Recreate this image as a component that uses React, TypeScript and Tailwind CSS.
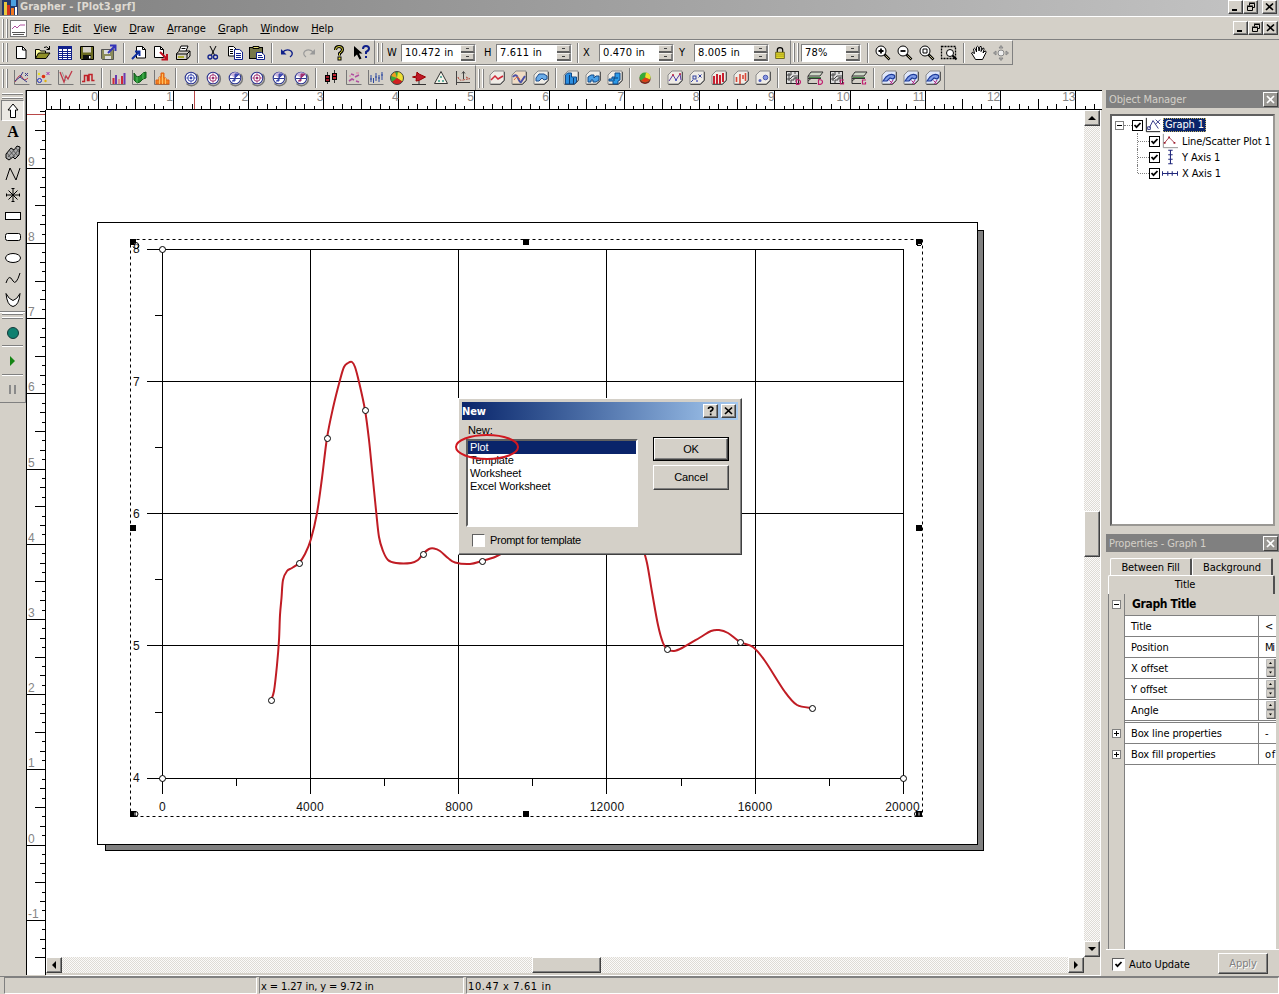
import React from 'react';

const RAISED =
  'border border-t-white border-l-white border-b-[#404040] border-r-[#404040] bg-[#d4d0c8] shadow-[inset_-1px_-1px_0_#808080]';
const SUNKEN = 'border border-t-[#808080] border-l-[#808080] border-b-white border-r-white';
const TRACK = 'bg-[repeating-conic-gradient(#dedbd5_0_25%,#fbfaf9_0_50%)] bg-[length:2px_2px]';

function Svg({ children, size = 18 }: { children: React.ReactNode; size?: number }) {
  return (
    <svg width={size} height={size} viewBox="0 0 18 18" fill="none" stroke="#000" className="shrink-0">
      {children}
    </svg>
  );
}

/* ---------- icon families ---------- */

const axes = <path d="M2.500 1v14.500h15" stroke="#777" />;

function AxesIcon({ children }: { children: React.ReactNode }) {
  return (
    <Svg>
      {axes}
      {children}
    </Svg>
  );
}

function Polar({ c, half }: { c: string; half?: boolean }) {
  return (
    <Svg>
      <path d="M14.500 5a6.800 6.800 0 0 1-10 9.500" stroke="#777" strokeWidth="1.500" />
      <circle cx="9" cy="9" r="5.800" fill="#fff" stroke="#2c3690" strokeWidth="1.100" />
      {half ? (
        <>
          <path d="M9 9L14 6A5.500 5.500 0 0 0 4.500 6z" fill="#c9b5dc" stroke="none" />
          <path d="M9 9l4-4h-4zM9 9v3H6" fill={c} stroke={c} />
          <path d="M4 9.500h10" stroke="#2c3690" />
        </>
      ) : (
        <>
          <circle cx="9" cy="9" r="3.300" stroke={c} />
          <circle cx="9" cy="9" r="1.300" fill={c} stroke="none" />
          <path d="M9 3.500v4M9 10.500v4M3.500 9h4M10.500 9h4" stroke={c} strokeWidth="0.600" />
        </>
      )}
    </Svg>
  );
}

function Cube({ children, fill = '#efece6' }: { children: React.ReactNode; fill?: string }) {
  return (
    <Svg>
      <path d="M2 6l4-4h10v9l-4 4H2z" fill={fill} stroke="#8b8b8b" />
      <path d="M2.500 15.500h10l4-4V3" stroke="#555" />
      {children}
    </Svg>
  );
}

const icons: Record<string, React.ReactNode> = {
  new: (
    <Svg>
      <path d="M4.500 2.500h6l3.500 3.500v8.500h-9.500z" fill="#fff" />
      <path d="M10.500 2.500v3.500h3.500" />
    </Svg>
  ),
  open: (
    <Svg>
      <path d="M1.500 14.500v-9h4l1 1.500h5v2" fill="#ffffa0" />
      <path d="M1.500 14.500l3-5.500h11.500l-4 5.500z" fill="#909028" />
      <path d="M10 3.500q3-2 5 1.500M15.500 2v3.500h-3" />
    </Svg>
  ),
  grid: (
    <Svg>
      <rect x="2.500" y="2.500" width="13" height="13" fill="#fff" stroke="#10208a" />
      <path d="M3 4h12" stroke="#10208a" strokeWidth="2" />
      <path d="M3 7.500h12M3 9.500h12M3 11.500h12M3 13.500h12M6.500 3v12M11.500 3v12" stroke="#10208a" />
    </Svg>
  ),
  save: (
    <Svg>
      <path d="M2.500 2.500h13v13h-12l-1-1z" fill="#6b6b22" />
      <path d="M5 3h8v5.500h-8z" fill="#d4d0c8" stroke="none" />
      <path d="M5 11h8v4h-8z" fill="#111" stroke="none" />
      <path d="M11 12h1.500v2.500h-1.500z" fill="#fff" stroke="none" />
    </Svg>
  ),
  export: (
    <Svg>
      <path d="M1.500 5.500h12v10h-11l-1-1z" fill="#8b8b5a" stroke="#555" />
      <path d="M4 6h6v4h-6zM5 12h6v3h-6z" fill="#ddd" stroke="none" />
      <path d="M8 9l7-7M10 1.500h5.500v5.500" stroke="#3434b8" strokeWidth="2" />
    </Svg>
  ),
  import: (
    <Svg>
      <path d="M6.500 2.500h6l3 3v8.500h-9z" fill="#fff" />
      <path d="M12.500 2.500v3h3" />
      <path d="M2 15l7-7M5 7.500h4.500v4.500" stroke="#1030a0" strokeWidth="2" />
    </Svg>
  ),
  exportPage: (
    <Svg>
      <path d="M2.500 2.500h6l3 3v8h-9z" fill="#fff" />
      <path d="M8.500 2.500v3h3" />
      <path d="M8 8l7 7M15 10v5.500h-5.500" stroke="#c01020" strokeWidth="2" />
    </Svg>
  ),
  print: (
    <Svg>
      <path d="M5 7l2-5h7l-2 5" fill="#fff" />
      <path d="M2.500 9.500l3-2.500h10.500v5l-3 3.500h-10.500z" fill="#d4d0c8" />
      <path d="M2.500 10h10.500l3-3M13 10v5M7.500 4.500h4" />
      <path d="M4 13h6" stroke="#a0a000" strokeWidth="1.500" />
    </Svg>
  ),
  cut: (
    <Svg>
      <path d="M6 2l4.500 9M12 2l-4.500 9" />
      <circle cx="6" cy="13" r="2" stroke="#10208a" strokeWidth="1.300" />
      <circle cx="11.500" cy="13" r="2" stroke="#10208a" strokeWidth="1.300" />
    </Svg>
  ),
  copy: (
    <Svg>
      <path d="M2.500 2.500h5l2.500 2.500v7h-7.500z" fill="#fff" />
      <path d="M8.500 5.500h5l3 2.500v7.500h-8z" fill="#fff" stroke="#10208a" />
      <path d="M4 5.500h3M4 7.500h3M4 9.500h3" />
      <path d="M10 9.500h5M10 11.500h5M10 13.500h5" stroke="#10208a" />
    </Svg>
  ),
  paste: (
    <Svg>
      <rect x="1.500" y="3.500" width="13" height="11" fill="#77774a" />
      <path d="M5 4.500v-2h6v2z" fill="#e8e070" />
      <path d="M8.500 8.500h5l3 2.500v4.500h-8z" fill="#fff" stroke="#10208a" />
      <path d="M10 11.500h4M10 13.500h5" stroke="#10208a" />
    </Svg>
  ),
  undo: (
    <Svg>
      <path d="M4 9q4-5 9-2 3 3-1 6" stroke="#10208a" strokeWidth="1.400" />
      <path d="M3 5v5.500h5.500z" fill="#10208a" stroke="none" />
    </Svg>
  ),
  redo: (
    <Svg>
      <path d="M14 9q-4-5-9-2-3 3 1 6" stroke="#999" strokeWidth="1.200" />
      <path d="M15 5v5.500h-5.500z" fill="#999" stroke="none" />
    </Svg>
  ),
  help: (
    <Svg>
      <path d="M5.500 6q0-3.500 3.500-3.500t3.500 3q0 2-3 4v2" strokeWidth="3" />
      <path d="M5.500 6q0-3.500 3.500-3.500t3.500 3q0 2-3 4v2" stroke="#e8e040" />
      <rect x="8" y="13" width="3" height="3" fill="#e8e040" />
    </Svg>
  ),
  whats: (
    <Svg>
      <path d="M2 2v11l3-2.500 2.500 5 2-1-2.500-5h3.500z" fill="#000" stroke="none" />
      <path d="M11 5q0-3 3-3t3 2.500q0 2-3 3.500v2M14 12v2" stroke="#10208a" strokeWidth="2" />
    </Svg>
  ),
  lock: (
    <Svg size={14}>
      <path d="M5.500 8v-3q0-3 3.500-3t3.500 3v3" strokeWidth="1.500" />
      <rect x="3.500" y="8" width="11" height="8" fill="#e6dc28" stroke="#55500a" />
      <path d="M4 10.500h10M4 13h10" stroke="#99901a" />
    </Svg>
  ),
  hand: (
    <Svg>
      <path
        d="M5.500 15.500L1.500 9q0-1.500 3 .5L3.500 5q1-1.500 2 0l1 3L6.500 3q1-1.500 2 0l.5 4 1-4.500q1.500-.5 1.500 1L11 7.500l2-3.500q1.500 0 1 1.500L13 9l2-2q1.500 0 1 1.500l-3.500 7z"
        fill="#fff"
      />
    </Svg>
  ),
  pan: (
    <Svg>
      <g stroke="#888" fill="#aaa">
        <circle cx="9" cy="9" r="3" fill="#eee" />
        <path d="M9 1.500l2 2.500h-4zM9 16.500l2-2.500h-4zM1.500 9l2.500-2v4zM16.500 9l-2.500-2v4z" />
      </g>
    </Svg>
  ),
  zoomIn: <Zoom d="M4.500 7h5M7 4.500v5" />,
  zoomOut: <Zoom d="M4.500 7h5" />,
  zoomFit: <Zoom d="M5 5h4v4h-4z" thin />,
  zoomRect: (
    <Svg>
      <rect x="1.500" y="2.500" width="14" height="12" strokeDasharray="2 1" strokeWidth="1.300" />
      <circle cx="10" cy="9" r="3.500" fill="#fff" />
      <path d="M12.500 11.500l4 4" strokeWidth="2" />
    </Svg>
  ),

  line: (
    <AxesIcon>
      <path d="M3 13q5-10 7-5t6 1" stroke="#c04050" />
      <path d="M3 12l5-4 3-5M8 8l7 5M13 4l3 3M16 4l-3 3" stroke="#3a3a8a" />
    </AxesIcon>
  ),
  scatter: (
    <AxesIcon>
      <circle cx="5.500" cy="11.500" r="2" stroke="#2030c0" />
      <circle cx="9.500" cy="7.500" r="1.800" fill="#e03010" stroke="none" />
      <path d="M12.500 3l3 3M15.500 3l-3 3" stroke="#a030b0" />
      <circle cx="11.500" cy="12" r="1.200" fill="#e0b010" stroke="none" />
      <circle cx="5" cy="5" r="1.200" fill="#e8e020" stroke="none" />
    </AxesIcon>
  ),
  func: (
    <AxesIcon>
      <path d="M4 3l4 10 2-6 2 3 4-8" stroke="#c03848" strokeWidth="1.300" />
      <path d="M6 3l4 9" stroke="#999" />
    </AxesIcon>
  ),
  step: (
    <AxesIcon>
      <path d="M4 12.500h2.500v-6h3v5h1.500v-6h3v6h2.500" stroke="#c02028" strokeWidth="1.500" />
    </AxesIcon>
  ),
  bar: (
    <AxesIcon>
      <path d="M5.500 15v-6M14 15v-8" stroke="#d02838" strokeWidth="2" />
      <path d="M8 15v-9M16.500 15v-11" stroke="#6a3ab0" strokeWidth="2" />
      <path d="M11 15v-5" stroke="#e09090" strokeWidth="2" />
    </AxesIcon>
  ),
  hilo: (
    <AxesIcon>
      <path d="M4 4l3 4 3-1 3-3 3-1v6l-3 1-3 3-3 1-3-3z" fill="#1e8a2c" stroke="#145a1c" />
      <path d="M7 8v6M13 4v6" stroke="#5ac060" />
    </AxesIcon>
  ),
  hist: (
    <AxesIcon>
      <path d="M4 15v-4h3v-3h2v-4h3v5h2v2h3v4z" fill="#f08020" stroke="#e06010" />
      <path d="M7.500 8v7M10.500 5v10M13.500 9v6" stroke="#ffc060" />
    </AxesIcon>
  ),
  box: (
    <Svg>
      <path d="M5.500 3v12M12.500 1v13" stroke="#333" />
      <rect x="3.500" y="6.500" width="4" height="6" fill="#a01828" />
      <rect x="10.500" y="4.500" width="4" height="6" fill="#c02030" />
      <path d="M3.500 9.500h4M10.500 7.500h4" />
    </Svg>
  ),
  bubble: (
    <AxesIcon>
      <path d="M5 12l3-2 2 1M7 5l3 1M11 8l4-2M12 12l3 1" stroke="#b050a0" strokeWidth="1.600" />
      <path d="M5 7h2M12 4h3" stroke="#e080a0" />
    </AxesIcon>
  ),
  vector: (
    <AxesIcon>
      <path d="M5 6v7M7.500 9v5M10 4v8M13 6v7M16 3v8M4 10h2M9 8h2M12 9h2M15 6h2" stroke="#2c48a0" />
    </AxesIcon>
  ),
  pie: (
    <Svg>
      <circle cx="9" cy="9" r="6.500" fill="#38a838" stroke="none" />
      <path d="M9 9l1-6.500A6.500 6.500 0 0 1 14.500 12.500z" fill="#f0e030" stroke="none" />
      <path d="M9 9l5.500 3.500A6.500 6.500 0 0 1 4 13z" fill="#d02020" stroke="none" />
      <path d="M9 9L3 7A6.500 6.500 0 0 1 7 2.800z" fill="#f0a020" stroke="none" />
      <circle cx="9" cy="9" r="6.500" stroke="#444" />
    </Svg>
  ),
  rose: (
    <Svg>
      <path d="M7 3l2 2 6.500 3-6.500 3.500L6 12l.5-3-4-1 4-1z" fill="#c01828" stroke="#900" />
      <path d="M9 12v3M2 15.500h14" stroke="#333" />
    </Svg>
  ),
  ternary: (
    <Svg>
      <path d="M9 2.500l6.500 12h-13z" fill="#f4f4ea" stroke="#333" />
      <circle cx="9" cy="8" r="1" fill="#389a88" stroke="none" />
      <circle cx="7" cy="12" r="1" fill="#389a88" stroke="none" />
      <circle cx="11" cy="12" r="1" fill="#389a88" stroke="none" />
    </Svg>
  ),
  err: (
    <Svg>
      <path d="M2.500 2v14M2 13.500h14M9.500 3v7M8 4.500l1.500-2 1.500 2" stroke="#444" />
      <path d="M4 8q1 4 5 3t6-1M12 8l4 2" stroke="#b04030" strokeDasharray="2 1" />
    </Svg>
  ),
  c3line: (
    <Cube>
      <path d="M3 11l4-4 3 3 5-3" stroke="#d02838" strokeWidth="1.500" />
    </Cube>
  ),
  c3wave: (
    <Cube fill="#f0dcc4">
      <path d="M3 8q3-4 5 1t3 4l4-6" stroke="#4a50a8" strokeWidth="2" />
      <path d="M4 11q4-6 6 0" stroke="#e06a40" />
    </Cube>
  ),
  c3ribbon: (
    <Cube>
      <path d="M4 12v-3l3-4h5l3 2v3l-3 1-2-2-3 3z" fill="#6aace8" stroke="#1c4e90" />
    </Cube>
  ),
  c3bar: (
    <Cube>
      <path d="M3.500 15v-9l2-2h4v4h5v5l-2 2z" fill="#2b8ee0" stroke="#124a88" />
      <path d="M7.500 15V6M11.500 15V9" stroke="#0d3c70" />
    </Cube>
  ),
  c3cat: (
    <Cube>
      <path d="M4 13v-5l3-2h3v3l2-2h3v4l-3 2h-3v-2h-2v2z" fill="#49a0e8" stroke="#124a88" />
    </Cube>
  ),
  c3float: (
    <Cube>
      <path d="M3 10h3v-2h3v-4h5v7l-2 1v3h-5v-3h-4z" fill="#2b9ae8" stroke="#124a88" />
      <path d="M8 12v-3h4" stroke="#0d3c70" />
    </Cube>
  ),
  c3pie: (
    <Svg>
      <ellipse cx="9" cy="10" rx="5.500" ry="5" fill="#7a1c1c" stroke="none" />
      <ellipse cx="9" cy="8.500" rx="5.500" ry="5" fill="#38a838" stroke="none" />
      <path d="M9 8.500l1-5a5.500 5 0 0 1 4 7z" fill="#f0e030" stroke="none" />
      <path d="M9 8.500l5 2a5.500 5 0 0 1-9 1z" fill="#e03818" stroke="none" />
    </Svg>
  ),
  xyz: (
    <Cube>
      <path d="M3 12l4-6 3 5 4-6 1 6" stroke="#5a3aa0" />
      <circle cx="7" cy="6" r="1" fill="#c02040" stroke="none" />
      <circle cx="10" cy="11" r="1" fill="#3040c0" stroke="none" />
      <circle cx="14" cy="5" r="1" fill="#c02040" stroke="none" />
    </Cube>
  ),
  xyzScatter: (
    <Cube>
      <rect x="5" y="7" width="3" height="3" stroke="#3040a0" />
      <path d="M10.500 5.500l3 3M13.500 5.500l-3 3" stroke="#3040a0" />
      <circle cx="9" cy="12" r="1" fill="#5a60c0" stroke="none" />
      <path d="M3 13l2-2" stroke="#3040a0" />
    </Cube>
  ),
  xyzBar: (
    <Cube>
      <path d="M4 15V7M7 15V5M10 15V6M13 13V4" stroke="#c82030" strokeWidth="2" />
    </Cube>
  ),
  xyzFloat: (
    <Cube>
      <path d="M4.500 13V8M8 15V5M11 10V6M13.500 12V4" stroke="#d84838" strokeWidth="1.600" />
    </Cube>
  ),
  xyzBubble: (
    <Cube>
      <circle cx="6" cy="11.500" r="1.500" fill="#5060c0" stroke="none" />
      <circle cx="11.500" cy="8.500" r="2.300" fill="#8898e0" stroke="#4a58b0" />
    </Cube>
  ),
  contourD: <Contour c="#c02070" />,
  contourG: <Contour c="#c02070" g />,
  surfD: <Surface c="#c02070" />,
  surfG: <Surface c="#c02070" g />,
  map: (
    <Cube fill="#dfe6f8">
      <path d="M3 12l3-4q4-4 8-2 2 2-1 4l-3-1-3 3z" fill="#7f9ce8" stroke="#1c3a98" strokeWidth="1.200" />
      <path d="M9.500 11.500l3.500 3.500M13 11l-2.500 4" stroke="#b02080" />
    </Cube>
  ),
};

function Zoom({ d, thin }: { d: string; thin?: boolean }) {
  return (
    <Svg>
      <circle cx="7" cy="7" r="5" fill="#fff" />
      <path d={d} strokeWidth={thin ? 1 : 1.8} />
      <path d="M10.500 10.500l5 5" strokeWidth="2.500" />
      <path d="M11.500 11.500l3.500 3.500" stroke="#e8e0a0" strokeWidth="0.800" />
    </Svg>
  );
}

function Contour({ c, g }: { c: string; g?: boolean }) {
  return (
    <Svg>
      <rect x="2.500" y="2.500" width="12" height="12" fill="#ddd" stroke="#222" />
      <path d="M3 6h4V3M3 10h3l3-3h5M7 14v-3h3V9h4M11 3v2M5 4v8M12 8v5" stroke="#444" />
      <path d={g ? 'M16 11h-3.500v4h3v-2' : 'M12.500 10.500v5q4 0 4-2.500t-4-2.500'} stroke={c} strokeWidth="1.200" />
    </Svg>
  );
}

function Surface({ c, g }: { c: string; g?: boolean }) {
  return (
    <Svg>
      <path d="M2 7l3-4h12l-3 4z" fill="#cfd8c8" stroke="#333" />
      <path d="M2 9.500h13M2 14.500h9M2 12l3-2.500M2 7v7.500" stroke="#333" />
      <path d="M3 8.500h12" stroke="#4a8a4a" />
      <path d={g ? 'M16 11h-3.500v4h3v-2' : 'M12.500 10.500v5q4 0 4-2.500t-4-2.500'} stroke={c} strokeWidth="1.200" />
    </Svg>
  );
}

/* ---------- small controls ---------- */

function Grip() {
  return (
    <div className="flex h-[19px] w-[10px] shrink-0 gap-[2px] pl-[2px]">
      <div className="w-[2px] border-l border-l-white border-r border-r-[#808080]" />
      <div className="w-[2px] border-l border-l-white border-r border-r-[#808080]" />
    </div>
  );
}

function Sep() {
  return (
    <div className="flex h-[20px] w-2 shrink-0 justify-center">
      <div className="w-[2px] border-l border-l-[#808080] border-r border-r-white" />
    </div>
  );
}

function IconRow({ names }: { names: string[] }) {
  return (
    <>
      {names.map((name, i) =>
        name === '|' ? (
          <Sep key={i} />
        ) : (
          <div key={i} className="flex h-[22px] w-[22px] shrink-0 items-center justify-center">
            {icons[name]}
          </div>
        ),
      )}
    </>
  );
}

function Spinner() {
  return (
    <div className="flex h-[16px] w-[14px] shrink-0 flex-col">
      {[0, 1].map((i) => (
        <div
          key={i}
          className="flex flex-1 items-center justify-center border-r-2 border-b-2 border-t border-t-[#f4f2ee] border-r-[#808080] border-b-[#606060] bg-[#d4d0c8]"
        >
          <div className="h-px w-[3px] bg-[#404040]" />
        </div>
      ))}
    </div>
  );
}

function Field({ value, className }: { value: string; className: string }) {
  return (
    <div className={`flex h-[18px] shrink-0 items-center bg-white pl-[3px] tracking-[0.2px] ${SUNKEN} ${className}`}>
      <span className="flex-1 whitespace-nowrap">{value}</span>
      <Spinner />
    </div>
  );
}

function WinButton({ kind, className = '' }: { kind: 'min' | 'restore' | 'close' | 'help'; className?: string }) {
  return (
    <div className={`flex h-[14px] w-[15px] shrink-0 items-center justify-center ${RAISED} ${className}`}>
      <svg width="10" height="10" viewBox="0 0 10 10" fill="none" stroke="currentColor">
        {kind === 'min' && <path d="M1 8h5" strokeWidth="2" />}
        {kind === 'restore' && <path d="M3.500 3.500v-2h5v4h-2M3 1h6M1.500 4.500h5v4h-5zM1 4h6" />}
        {kind === 'close' && <path d="M1 1.500l7 6.500M8 1.500l-7 6.500" strokeWidth="1.700" />}
        {kind === 'help' && <path d="M2.500 3q0-2 2.200-2t2.200 1.700q0 1.300-2.200 2.500v1M4.700 7.500v1.700" strokeWidth="1.700" />}
      </svg>
    </div>
  );
}

function Check({ on = true, flat, className = '' }: { on?: boolean; flat?: boolean; className?: string }) {
  return (
    <div
      className={`flex shrink-0 items-center justify-center bg-white ${
        flat ? 'h-[11px] w-[11px] border border-black' : 'h-[13px] w-[13px] border border-t-[#606060] border-l-[#606060] border-b-white border-r-white'
      } ${className}`}
    >
      {on && (
        <svg width="9" height="9" viewBox="0 0 9 9" fill="none" stroke="#000" strokeWidth="1.800">
          <path d="M1.500 4l2 2.200 4-4.200" />
        </svg>
      )}
    </div>
  );
}

function ArrowButton({ d }: { d: string }) {
  return (
    <div className={`flex h-4 w-4 shrink-0 items-center justify-center ${RAISED}`}>
      <svg width="8" height="8" viewBox="0 0 8 8">
        <path d={d} />
      </svg>
    </div>
  );
}

/* ---------- rulers ---------- */

const STEP = 75.2;
const tickLength = (n: number) => (n % 8 === 0 ? 19 : n % 4 === 0 ? 10 : n % 2 === 0 ? 5 : 3);

function HorizontalRuler() {
  const ticks = [];
  for (let n = -5; n <= 106; n++) ticks.push({ n, x: Math.floor(98 + (n * STEP) / 8) + 0.5 });
  return (
    <svg width="1076" height="20" viewBox="26 90 1076 20" className="shrink-0 bg-white" fill="none" stroke="#000">
      <path d="M26 90.500H1102M46 109.500H1102M26.500 90v20M46.500 90v20" />
      {ticks.map(({ n, x }) => (
        <path key={n} d={`M${x} ${109 - tickLength(n)}V109`} />
      ))}
      <path d="M194.500 91V109" stroke="#b84848" />
      <g fill="#858585" stroke="none" fontSize="12" textAnchor="end" fontFamily="Liberation Sans, sans-serif">
        {Array.from({ length: 14 }, (_, i) => (
          <text key={i} x={97.7 + i * STEP} y="101">
            {i}
          </text>
        ))}
      </g>
    </svg>
  );
}

function VerticalRuler() {
  const ticks = [];
  for (let n = -12; n <= 78; n++) ticks.push({ n, y: Math.floor(845 - (n * STEP) / 8) + 0.5 });
  return (
    <svg width="20" height="865" viewBox="26 110 20 865" className="shrink-0 bg-white" fill="none" stroke="#000">
      <path d="M26.500 110V975M45.500 110V975" />
      {ticks.map(({ n, y }) => (
        <path key={n} d={`M${45 - tickLength(n)} ${y}H45`} />
      ))}
      <path d="M27 114.500H45" stroke="#b84848" />
      <g fill="#858585" stroke="none" fontSize="12" fontFamily="Liberation Sans, sans-serif">
        {Array.from({ length: 11 }, (_, i) => i - 1).map((v) => (
          <text key={v} x="28" y={842.5 - v * STEP}>
            {v}
          </text>
        ))}
      </g>
    </svg>
  );
}

/* ---------- plot ---------- */

type Pt = [number, number];

const leftCurve: Pt[] = [
  [271, 700], [274, 691], [277, 665], [279, 640], [280, 615], [281.5, 598], [283, 580], [287, 571], [292, 568],
  [299, 563], [305, 554], [311, 539], [317, 513], [322, 478], [327, 438], [333, 408], [340, 380], [344, 367],
  [348, 363], [352, 362], [355, 367], [359, 382], [365, 410], [369, 440], [372, 470], [376, 510], [379, 537],
  [383, 551], [388, 560], [396, 563], [411, 563], [418, 560], [423, 554], [429, 549], [434, 548.5], [440, 551],
  [448, 558], [455, 562.5], [470, 564], [482, 561], [495, 557], [505, 552],
];
const rightCurve: Pt[] = [
  [642, 545], [647, 563], [652, 592], [658, 625], [663, 643], [667, 649], [674, 651], [682, 648], [700, 637.5],
  [711, 631], [719, 630], [728, 633], [740, 642], [753, 647], [765, 661], [785, 692], [797, 705], [812, 708],
];
const nodes: Pt[] = [
  [162, 249], [162, 778], [903, 778], [271, 700], [299, 563], [327, 438], [365, 410], [423, 554], [482, 561],
  [667, 649], [740, 642], [812, 708],
];
const handles: Pt[] = [
  [133, 242], [526, 242], [919, 242], [133, 528], [919, 528], [133, 814], [526, 814], [919, 814],
];

function smooth(p: Pt[]) {
  let d = `M${p[0]}`;
  for (let i = 0; i < p.length - 1; i++) {
    const [a, b, c, e] = [p[i - 1] ?? p[i], p[i], p[i + 1], p[i + 2] ?? p[i + 1]];
    d += `C${b[0] + (c[0] - a[0]) / 6} ${b[1] + (c[1] - a[1]) / 6} ${c[0] - (e[0] - b[0]) / 6} ${c[1] - (e[1] - b[1]) / 6} ${c[0]} ${c[1]}`;
  }
  return d;
}

function Plot() {
  return (
    <svg width="1038" height="847" viewBox="46 110 1038 847" className="block" fill="none" stroke="#000">
      <rect x="105.500" y="230.500" width="878" height="620" fill="#808080" />
      <rect x="97.500" y="222.500" width="880" height="622" fill="#fff" />
      <rect x="130.500" y="239.500" width="792" height="577" strokeDasharray="3 3" />
      {[162, 310, 458, 606, 755, 903].map((x) => (
        <path key={x} d={`M${x}.5 249V794`} />
      ))}
      {[249, 381, 513, 645, 778].map((y) => (
        <path key={y} d={`M147 ${y}.5H903`} />
      ))}
      {[236, 384, 532, 681, 829].map((x) => (
        <path key={x} d={`M${x}.5 778V786`} />
      ))}
      {[315, 447, 579, 712].map((y) => (
        <path key={y} d={`M155 ${y}.5H162`} />
      ))}
      <g fill="#111" stroke="none" fontSize="12" fontFamily="Liberation Sans, sans-serif">
        {[253, 386, 518, 650, 782].map((y, i) => (
          <text key={y} x="133" y={y}>
            {8 - i}
          </text>
        ))}
        {[162.5, 310, 459, 607, 755, 902.5].map((x, i) => (
          <text key={x} x={x} y="811" textAnchor="middle" letterSpacing="0.25">
            {i * 4000}
          </text>
        ))}
      </g>
      <path d={smooth(leftCurve)} stroke="#c01c24" strokeWidth="2" />
      <path d={smooth(rightCurve)} stroke="#c01c24" strokeWidth="2" />
      {handles.map(([x, y]) => (
        <rect key={`${x}-${y}`} x={x - 3} y={y - 3} width="6" height="6" fill="#000" stroke="none" />
      ))}
      <path d="M133 246.500a3 3 0 1 0 3-4M917 245.500h4M135.500 811.500a2.500 2.500 0 0 1 0 5M917 811.500a2.500 2.500 0 0 0 0 5" />
      <path d="M135 243.500l2 2M918 244.500h3M135 812.500v3M919 812.500v3" stroke="#ddd" />
      {nodes.map(([x, y]) => (
        <circle key={`${x}-${y}`} cx={x + 0.5} cy={y + 0.5} r="3" fill="#fff" />
      ))}
    </svg>
  );
}

/* ---------- "New" dialog ---------- */

function NewDialog() {
  return (
    <div
      className={`absolute left-[412px] top-[288px] flex h-[157px] w-[284px] flex-col p-[3px] font-['Liberation_Sans',sans-serif] text-[11px] leading-[13px] ${RAISED}`}
    >
      <div className="flex h-[18px] shrink-0 items-center bg-linear-to-r from-[#0a246a] to-[#a6caf0] pr-[2px]">
        <span className="flex-1 font-['DejaVu_Sans_Condensed','DejaVu_Sans',sans-serif] font-bold text-white">New</span>
        <WinButton kind="help" className="mr-[3px]" />
        <WinButton kind="close" />
      </div>
      <div className="flex pl-1 pt-1">
        <div className="w-[172px] shrink-0">
          <div className="pl-[2px]">New:</div>
          <div className="mt-[2px] h-[88px] border-2 border-t-[#606060] border-l-[#606060] border-b-white border-r-white bg-white">
            <div className="bg-[#0a246a] pl-[2px] text-white">Plot</div>
            <div className="pl-[2px]">Template</div>
            <div className="pl-[2px]">Worksheet</div>
            <div className="pl-[2px]">Excel Worksheet</div>
          </div>
          <div className="mt-[7px] flex items-center gap-[5px] pl-[6px]">
            <Check on={false} />
            <span className="whitespace-nowrap tracking-[-0.3px]">Prompt for template</span>
          </div>
        </div>
        <div className="ml-[15px] mt-[13px] flex w-[76px] flex-col gap-1">
          <div className="border border-black">
            <div className={`flex h-[22px] items-center justify-center ${RAISED}`}>OK</div>
          </div>
          <div className={`flex h-[25px] items-center justify-center ${RAISED}`}>Cancel</div>
        </div>
      </div>
      <svg width="66" height="28" viewBox="0 0 66 28" className="absolute -left-[5px] top-[34px]" fill="none">
        <ellipse cx="33" cy="14" rx="31" ry="12" stroke="#d01820" strokeWidth="2" />
      </svg>
    </div>
  );
}

/* ---------- left toolbox ---------- */

const tools: React.ReactNode[] = [
  <path d="M9 2l5 6h-2.500v7.500h-5V8H4z" fill="#fff" />,
  <text x="9" y="14" textAnchor="middle" fontSize="16" fontWeight="bold" fill="#000" stroke="none" fontFamily="Liberation Serif, serif">A</text>,
  <g>
    <path d="M2 10l5-6 3 2 3-4 3 1-1 8-4 4-2-2-4 3-3-2z" fill="#aaa" />
    <path d="M3 9l4 5M5 6l6 7M8 5l6 7M12 4l3 4M4 13l8-9M8 14l7-9" stroke="#444" strokeWidth="0.800" />
  </g>,
  <path d="M2 15L6 3l6 12 4-12" />,
  <path d="M9 2v14M2 9h14M4.500 4.500l9 9M13.500 4.500l-9 9M7.500 2.500h3M7.500 15.500h3M2.500 7.500v3M15.500 7.500v3" />,
  <rect x="1.500" y="5.500" width="15" height="7" fill="#fff" />,
  <rect x="1.500" y="5.500" width="15" height="7" rx="2" fill="#fff" />,
  <ellipse cx="9" cy="9" rx="7.500" ry="4.500" fill="#fff" />,
  <path d="M2 13q3-10 7-2 3 5 7-8" />,
  <path d="M2 2.500q1 12 7 13 6-1 7-13-3 6-7 7-4-1-7-7z" fill="#fff" />,
];

function HGrip() {
  return (
    <div className="mx-[2px] flex h-[7px] flex-col gap-[2px]">
      <div className="h-[2px] border-t border-t-white border-b border-b-[#808080]" />
      <div className="h-[2px] border-t border-t-white border-b border-b-[#808080]" />
    </div>
  );
}

function Toolbox() {
  return (
    <div className="flex w-[26px] shrink-0 flex-col">
      <div className="flex h-[313px] flex-col border-r border-b border-[#808080] pt-[3px]">
        <HGrip />
        {tools.map((tool, i) => (
          <div key={i} className={`mx-[1px] flex h-[21px] items-center justify-center ${i === 0 ? `bg-[#ebe8e3] ${SUNKEN}` : ''}`}>
            <Svg>{tool}</Svg>
          </div>
        ))}
        <div className="mt-px border-t border-t-[#808080] border-b border-b-white" />
        <HGrip />
        <div className="flex h-[25px] shrink-0 items-center justify-center">
          <svg width="14" height="14" viewBox="0 0 14 14">
            <circle cx="7" cy="7" r="5.500" fill="#0e8070" stroke="#143a3a" />
          </svg>
        </div>
        <div className="mx-[2px] border-t border-t-[#808080] border-b border-b-white" />
        <div className="flex h-[27px] shrink-0 items-center justify-center">
          <svg width="6" height="10" viewBox="0 0 6 10">
            <path d="M0 0l5 5-5 5z" fill="#148414" />
          </svg>
        </div>
        <div className="mx-[2px] border-t border-t-[#808080] border-b border-b-white" />
        <div className="flex flex-1 items-center justify-center gap-[3px] pt-px">
          <div className="h-[9px] w-[2px] bg-[#8a8a8a]" />
          <div className="h-[9px] w-[2px] bg-[#8a8a8a]" />
        </div>
      </div>
    </div>
  );
}

/* ---------- right dock ---------- */

function DockTitle({ text }: { text: string }) {
  return (
    <div className="flex h-[18px] shrink-0 items-center bg-[#808080] pl-[3px] pr-[1px] text-[#d4d0c8]">
      <span className="flex-1">{text}</span>
      <div className="flex h-[15px] w-[15px] items-center justify-center border border-t-white border-l-white border-b-[#404040] border-r-[#404040] bg-[#9a9894] text-white">
        <svg width="9" height="9" viewBox="0 0 9 9" stroke="#fff" strokeWidth="1.600">
          <path d="M1 1l7 7M8 1l-7 7" />
        </svg>
      </div>
    </div>
  );
}

function Expander({ sign }: { sign: '+' | '-' }) {
  return (
    <svg width="9" height="9" viewBox="0 0 9 9" fill="#fff" className="shrink-0">
      <rect x="0.500" y="0.500" width="8" height="8" stroke="#808080" />
      <path d={sign === '+' ? 'M2 4.500h5M4.500 2v5' : 'M2 4.500h5'} stroke="#000" />
    </svg>
  );
}

const children = [
  { name: 'Line/Scatter Plot 1', icon: <><path d="M1.500 1v15.500H18" stroke="#888" /><path d="M3 11l5-6 6 6" stroke="#a03040" /><path d="M2 10h2v2H2zM7 4h2v2H7zM13 10h2v2h-2z" fill="#a02030" stroke="none" /></> },
  { name: 'Y Axis 1', icon: <path d="M9.500 1v16M7 1.500h5M7 6.500h5M7 11.500h5M7 16.500h5" stroke="#22287c" strokeWidth="1.200" /> },
  { name: 'X Axis 1', icon: <path d="M0 9.500h18M.5 7v5M6.500 7v5M11.500 7v5M17.500 7v5" stroke="#22287c" strokeWidth="1.200" /> },
];

function ObjectManager() {
  return (
    <div className="mx-1 mt-[6px] h-[412px] shrink-0 border-2 border-t-[#606060] border-l-[#606060] border-b-[#9a9894] border-r-[#9a9894] bg-white pt-px">
      <div className="flex h-4 items-center pl-[3px]">
        <Expander sign="-" />
        <div className="w-[8px] border-t border-dotted border-[#808080]" />
        <Check flat />
        <div className="flex w-5 justify-center">
          <Svg size={16}>
            <path d="M1.500 1v15.500H17" />
            <path d="M5 12l4-8 6 9M12 3l5 5M17 3l-5 5M3 11h3v3H3z" stroke="#22287c" />
          </Svg>
        </div>
        <span className="bg-[#0a246a] px-[2px] leading-[14px] text-white outline-1 -outline-offset-1 outline-dotted outline-[#c0b060]">Graph 1</span>
      </div>
      {children.map((item, i) => (
        <div key={item.name} className="flex h-4 items-center pl-[25px]">
          <div className={`w-px self-start border-l border-dotted border-[#808080] ${i === 2 ? 'h-[8px]' : 'h-4'}`} />
          <div className="w-[11px] border-t border-dotted border-[#808080]" />
          <Check flat />
          <div className="flex w-[20px] justify-center">
            <Svg size={16}>{item.icon}</Svg>
          </div>
          <span className="whitespace-nowrap pl-[2px]">{item.name}</span>
        </div>
      ))}
    </div>
  );
}

function PropRow({ name, value, spin, sign }: { name: string; value?: string; spin?: boolean; sign?: '+' }) {
  return (
    <div className="flex h-[21px] shrink-0">
      <div className="flex w-[15px] items-center justify-center bg-[#d4d0c8]">{sign && <Expander sign={sign} />}</div>
      <div className="flex w-[135px] items-center border-r border-b border-l border-[#808080] pl-[6px]">{name}</div>
      <div className="flex flex-1 items-center justify-end whitespace-nowrap border-b border-[#808080]">
        {value && <span className="w-[11px] tracking-[-1.2px]">{value}</span>}
        {spin && (
          <svg width="10" height="18" viewBox="0 0 10 18" fill="#d4d0c8" stroke="#606060">
            <path d="M0.500 0.500h8v8h-8zM0.500 9.500h8v8h-8z" stroke="#bbb" />
            <path d="M9 0v18M1 8.500h8M1 17.500h8" strokeWidth="1.500" />
            <path d="M3 5h3l-1.500-2zM3 12.500h3l-1.500 2z" fill="#000" stroke="none" />
          </svg>
        )}
      </div>
    </div>
  );
}

function Properties() {
  const tab = 'flex items-center justify-center rounded-t-[2px] border-t border-l border-t-white border-l-white border-r-2 border-r-[#505050]';
  return (
    <>
      <div className="ml-1 mr-[5px] mt-[6px] flex h-[17px] shrink-0 pr-px">
        <div className={`w-[82px] ${tab}`}>Between Fill</div>
        <div className={`w-[81px] ${tab}`}>Background</div>
      </div>
      <div className={`ml-[2px] mr-[4px] h-[19px] shrink-0 pb-px ${tab}`}>
        <span className="-ml-[12px]">Title</span>
      </div>
      <div className="ml-[2px] mr-[3px] flex h-[355px] shrink-0 flex-col border-l border-[#808080] bg-white">
        <div className="flex h-[22px] shrink-0 bg-[#d4d0c8]">
          <div className="flex w-[15px] items-center justify-center pb-[2px]">
            <Expander sign="-" />
          </div>
          <div className="flex flex-1 items-center border-b border-l border-[#808080] pl-[7px] text-[12px] font-bold tracking-[-0.35px]">
            Graph Title
          </div>
        </div>
        <PropRow name="Title" value="<" />
        <PropRow name="Position" value="Mi" />
        <PropRow name="X offset" spin />
        <PropRow name="Y offset" spin />
        <PropRow name="Angle" spin />
        <div className="flex h-[2px] shrink-0">
          <div className="w-[15px] bg-[#d4d0c8]" />
          <div className="flex-1 border-b border-l border-[#808080]" />
        </div>
        <PropRow name="Box line properties" value="-" sign="+" />
        <PropRow name="Box fill properties" value="o f" sign="+" />
        <div className="w-[16px] flex-1 border-r border-[#808080] bg-[#d4d0c8]" />
      </div>
      <div className="flex h-[27px] shrink-0 items-center border-t border-white pl-[6px] pr-[11px] pt-[3px]">
        <Check />
        <span className="flex-1 pl-1">Auto Update</span>
        <div className={`mb-[3px] flex h-[21px] w-[50px] items-center justify-center text-[#808080] [text-shadow:1px_1px_0_#fff] ${RAISED}`}>
          Apply
        </div>
      </div>
    </>
  );
}

/* ---------- page ---------- */

const menu = ['File', 'Edit', 'View', 'Draw', 'Arrange', 'Graph', 'Window', 'Help'];

const fileBar = ['new', 'open', 'grid', 'save', 'export', '|', 'import', 'exportPage', 'print', '|', 'cut', 'copy', 'paste', '|', 'undo', 'redo', '|', 'help', 'whats'];
const zoomBar = ['|', 'zoomIn', 'zoomOut', 'zoomFit', 'zoomRect', '|', 'hand', 'pan'];
const plots2d = ['line', 'scatter', 'func', 'step', '|', 'bar', 'hilo', 'hist', '|'];
const plots2dMore = ['|', 'box', 'bubble', 'vector', 'pie', 'rose', 'ternary', 'err'];
const plots3d = ['c3line', 'c3wave', 'c3ribbon', '|', 'c3bar', 'c3cat', 'c3float', '|', 'c3pie', '|', 'xyz', 'xyzScatter', 'xyzBar', 'xyzFloat', 'xyzBubble', '|', 'contourD', 'surfD', 'contourG', 'surfG', '|', 'map', 'map', 'map'];

export default function App() {
  return (
    <div className="flex h-[994px] w-[1279px] flex-col overflow-hidden bg-[#d4d0c8] font-['DejaVu_Sans_Condensed','DejaVu_Sans',sans-serif] text-[11px] leading-[13px] tracking-[-0.12px] text-black">
      {/* Title bar */}
      <div className="flex h-[16px] shrink-0 items-start bg-linear-to-r from-[#808080] to-[#c4c4c4] pl-[2px] pr-[2px]">
        <svg width="16" height="15" viewBox="0 0 16 15">
          <path d="M0 0h16v15H0z" fill="#24386a" />
          <path d="M2 2h3v13H2z" fill="#e8c840" />
          <path d="M5 5h3v10H5z" fill="#d03020" />
          <path d="M9 0h5v6H9z" fill="#4aa0e0" />
          <path d="M9 8h3v7H9z" fill="#f07820" />
          <path d="M13 7h2v8h-2z" fill="#fff" />
        </svg>
        <span className="flex-1 pl-[2px] tracking-[0.05px] font-bold text-[#dedad2]">Grapher - [Plot3.grf]</span>
        <WinButton kind="min" />
        <WinButton kind="restore" />
        <WinButton kind="close" className="ml-[4px]" />
      </div>

      {/* Menu bar */}
      <div className="flex h-[24px] shrink-0 items-center border-t border-b border-t-white border-b-[#808080] pr-px">
        <Grip />
        <svg width="17" height="17" viewBox="0 0 17 17" fill="none">
          <rect x="0.500" y="0.500" width="16" height="16" fill="#fff" stroke="#777" />
          <path d="M2 9l3-3 2 2 3-3h5" stroke="#b050a0" />
          <path d="M2 12.500h13M3 14.500h11" stroke="#555" />
        </svg>
        <div className="flex flex-1 gap-[12.4px] pl-[7px] tracking-[-0.1px]">
          {menu.map((m) => (
            <span key={m}>
              <span className="underline">{m[0]}</span>
              {m.slice(1)}
            </span>
          ))}
        </div>
        <WinButton kind="min" />
        <WinButton kind="restore" />
        <WinButton kind="close" />
      </div>

      {/* Standard, position and view toolbars */}
      <div className="flex h-[25px] shrink-0">
        <div className="flex items-center border-t border-r border-b border-t-white border-r-[#808080] border-b-[#808080]">
          <Grip />
          <IconRow names={fileBar} />
          <div className="w-[2px]" />
        </div>
        <div className="flex items-center border-t border-r border-b border-t-white border-r-[#808080] border-b-[#808080]">
          <Grip />
          <span className="w-[16px] pl-[2px]">W</span>
          <Field value="10.472 in" className="w-[75px]" />
          <span className="w-[20px] pl-[8px]">H</span>
          <Field value="7.611 in" className="w-[76px]" />
          <div className="w-[2px]" />
          <Sep />
          <span className="w-[17px] pl-[1px]">X</span>
          <Field value="0.470 in" className="w-[75px]" />
          <span className="w-[20px] pl-[5px]">Y</span>
          <Field value="8.005 in" className="w-[75px]" />
          <div className="flex w-[21px] justify-center">{icons.lock}</div>
        </div>
        <div className="flex items-center border-t border-r border-b border-t-white border-r-[#808080] border-b-[#808080]">
          <Grip />
          <Field value="78%" className="w-[60px]" />
          <div className="w-[3px]" />
          <IconRow names={zoomBar} />
        </div>
      </div>

      {/* Graph creation toolbars */}
      <div className="flex h-[25px] shrink-0">
        <div className="flex items-center border-t border-r border-t-white border-r-[#808080]">
          <Grip />
          <IconRow names={plots2d} />
          {[0, 1, 2, 3, 4, 5].map((i) => (
            <div key={i} className="flex w-[22px] shrink-0 justify-center">
              <Polar c={i % 2 ? '#a03070' : '#3a48b0'} half={i === 2 || i > 3} />
            </div>
          ))}
          <IconRow names={plots2dMore} />
          <div className="w-px" />
        </div>
        <div className="flex items-center border-t border-r border-t-white border-r-[#808080]">
          <Grip />
          <IconRow names={plots3d} />
        </div>
      </div>

      {/* Workspace */}
      <div className="flex min-h-0 flex-1">
        <Toolbox />
        <div className="flex w-[1076px] shrink-0 flex-col">
          <HorizontalRuler />
          <div className="flex h-[866px]">
            <VerticalRuler />
            <div className="flex flex-col border-b border-r border-white">
              <div className="flex h-[847px]">
                <div className="relative w-[1038px] bg-white">
                  <Plot />
                  <NewDialog />
                </div>
                <div className={`flex w-4 flex-col ${TRACK}`}>
                  <ArrowButton d="M0 6h8L4 2z" />
                  <div className="flex-1" />
                  <div className={`h-[46px] w-4 ${RAISED}`} />
                  <div className="h-[384px]" />
                  <ArrowButton d="M0 2h8L4 6z" />
                </div>
              </div>
              <div className="flex h-4">
                <div className={`flex w-[1038px] ${TRACK}`}>
                  <ArrowButton d="M6 0v8L2 4z" />
                  <div className="flex-1" />
                  <div className={`h-4 w-[69px] ${RAISED}`} />
                  <div className="w-[467px]" />
                  <ArrowButton d="M2 0v8l4-4z" />
                </div>
              </div>
            </div>
          </div>
        </div>
        <div className="ml-[4px] flex flex-1 flex-col">
          <DockTitle text="Object Manager" />
          <ObjectManager />
          <div className="h-[8px] shrink-0" />
          <DockTitle text="Properties - Graph 1" />
          <Properties />
        </div>
      </div>

      {/* Status bar */}
      <div className="flex h-[18px] shrink-0 gap-[2px] border-t border-[#808080] pl-[4px]">
        <div className={`w-[253px] ${SUNKEN}`} />
        <div className={`w-[205px] pl-px pt-[2px] ${SUNKEN}`}>x = 1.27 in, y = 9.72 in</div>
        <div className={`flex-1 pl-px pt-[2px] tracking-[0.6px] ${SUNKEN}`}>10.47 x 7.61 in</div>
      </div>
    </div>
  );
}
